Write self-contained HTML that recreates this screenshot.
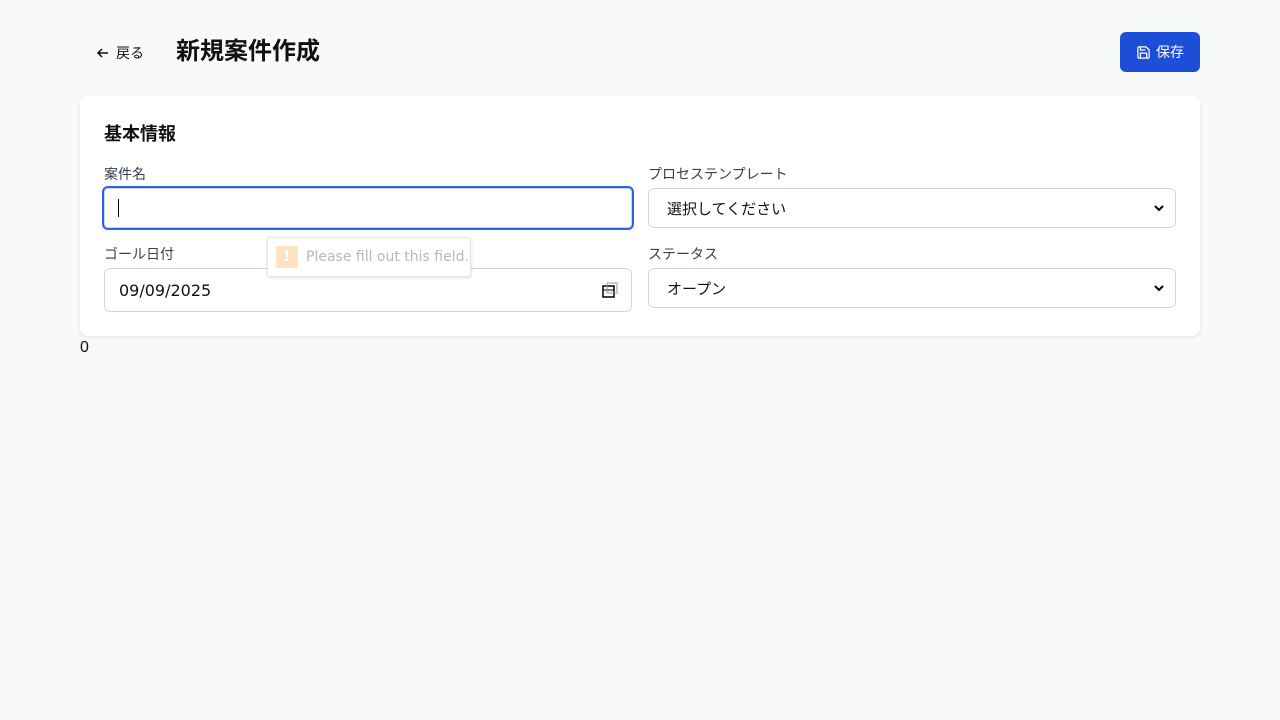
<!DOCTYPE html>
<html><head><meta charset="utf-8"><style>
*{box-sizing:border-box;margin:0;padding:0}
body{width:1280px;height:720px;background:#f8f9fb;font-family:"Liberation Sans","Noto Sans CJK JP",sans-serif;position:relative;color:#111}
.abs{position:absolute}
.back{left:96px;top:43px;font-size:14px;display:flex;align-items:center;gap:4px;color:#111}
.save{left:1120px;top:32px;width:80px;height:40px;background:#1d4ed8;border-radius:6px;color:#fff;font-size:14px;display:flex;align-items:center;justify-content:center;gap:5px}
.card{left:80px;top:96px;width:1120px;height:240px;background:#fff;border-radius:8px;box-shadow:0 1px 3px rgba(0,0,0,.1)}
.lbl{font-size:14px;color:#374151;line-height:18px}
.box{border:1px solid #d1d5db;border-radius:6px;background:#fff;height:40px;font-size:16px;display:flex;align-items:center;padding-left:14px}
.sel{font-size:15px;padding-left:18px}
.chev{position:absolute;right:10px;top:13px}
</style></head><body>
<div class="abs back"><svg width="14" height="14" viewBox="0 0 14 14"><path d="M12 7H2M6 3L2 7l4 4" stroke="#111" stroke-width="1.5" fill="none"/></svg><span style="margin-left:2px">戻る</span></div>
<div class="abs" style="left:176px;top:36px;font-size:24px;font-weight:bold;line-height:32px">新規案件作成</div>
<div class="abs save"><svg width="15" height="15" viewBox="0 0 24 24" fill="none" stroke="#fff" stroke-width="2"><path d="M5 3h11l5 5v11a2 2 0 0 1-2 2H5a2 2 0 0 1-2-2V5a2 2 0 0 1 2-2z"/><path d="M7 21v-8h10v8M7 3v5h8"/></svg>保存</div>
<div class="abs card"></div>
<div class="abs" style="left:104px;top:122px;font-size:18px;font-weight:bold;line-height:24px">基本情報</div>
<div class="abs lbl" style="left:104px;top:165px">案件名</div>
<div class="abs box" style="left:102px;top:186px;width:532px;height:44px;border:2px solid #2563eb;box-shadow:inset 0 0 0 1px #d1d5db"><span style="display:block;width:1px;height:18px;background:#000;margin-left:0"></span></div>
<div class="abs lbl" style="left:648px;top:165px">プロセステンプレート</div>
<div class="abs box sel" style="left:648px;top:188px;width:528px">選択してください<svg class="chev" width="12" height="12" viewBox="0 0 12 12"><path d="M2 4l4 4 4-4" stroke="#000" stroke-width="2" fill="none"/></svg></div>
<div class="abs lbl" style="left:104px;top:245px">ゴール日付</div>
<div class="abs box" style="left:104px;top:268px;width:528px;height:44px;font-size:16px;font-family:'DejaVu Sans',sans-serif">09/09/2025<svg style="position:absolute;right:12px;top:12px" width="18" height="18" viewBox="0 0 18 18"><rect x="2" y="5" width="11" height="11" fill="none" stroke="#000" stroke-width="1.5"/><path d="M2 9h11" stroke="#000"/><rect x="6" y="2" width="10" height="10" fill="none" stroke="#999"/></svg></div>
<div class="abs lbl" style="left:648px;top:245px">ステータス</div>
<div class="abs box sel" style="left:648px;top:268px;width:528px">オープン<svg class="chev" width="12" height="12" viewBox="0 0 12 12"><path d="M2 4l4 4 4-4" stroke="#000" stroke-width="2" fill="none"/></svg></div>
<div class="abs" style="left:267px;top:237px;width:204px;height:40px;background:#fff;border:1px solid #e5e5e5;border-radius:3px;box-shadow:0 1px 3px rgba(0,0,0,.12);display:flex;align-items:center;padding-left:8px;font-size:14px;color:#b8b8b8;font-family:'DejaVu Sans',sans-serif;white-space:nowrap">
<span style="width:22px;height:22px;background:#fde3c4;border-radius:2px;color:#fff;font-weight:bold;display:flex;align-items:center;justify-content:center;margin-right:8px;flex:none">!</span>Please fill out this field.</div>
<div class="abs" style="left:80px;top:339px;font-size:16px">0</div>
</body></html>
